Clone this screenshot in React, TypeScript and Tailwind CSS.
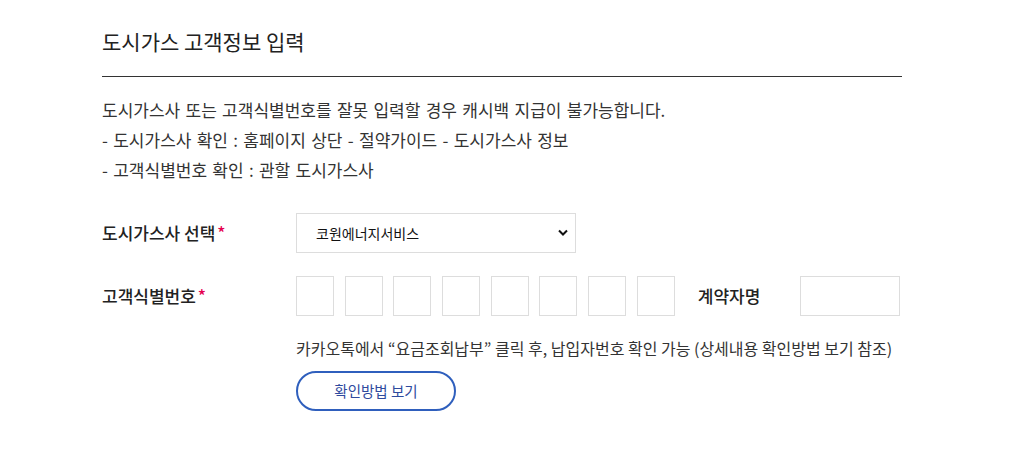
import React from 'react';

const font = { fontFamily: '"Noto Sans CJK KR", "Noto Sans", sans-serif' };

const Star = () => <span className="ml-[2px] text-[#e5004f]">*</span>;

export default function App() {
  const boxes = Array.from({ length: 8 });

  return (
    <div className="w-[1032px] h-[456px] bg-white text-[#333]" style={font}>
      <div className="ml-[102px] w-[800px] pt-[26px]">
        {/* Title */}
        <div className="border-b border-[#333] pb-[20px]">
          <h2 className="text-[21px] leading-[30px] font-normal text-[#222]">도시가스 고객정보 입력</h2>
        </div>

        {/* Notice */}
        <div className="mt-[18px] text-[17px] leading-[30px] text-[#333] [word-spacing:1.5px]">
          <p>도시가스사 또는 고객식별번호를 잘못 입력할 경우 캐시백 지급이 불가능합니다.</p>
          <p>- 도시가스사 확인 : 홈페이지 상단 - 절약가이드 - 도시가스사 정보</p>
          <p>- 고객식별번호 확인 : 관할 도시가스사</p>
        </div>

        {/* Gas company */}
        <div className="mt-[28px] flex items-center h-[40px]">
          <div className="w-[194px] text-[17px] font-medium text-[#222]">
            도시가스사 선택<Star />
          </div>
          <div className="relative w-[280px] h-[40px]">
            <select className="w-full h-full appearance-none border border-[#ddd] bg-white pl-[19px] text-[14px] text-[#111] outline-none">
              <option>코원에너지서비스</option>
            </select>
            <svg className="absolute right-[8px] top-[16px] pointer-events-none" width="10" height="7" viewBox="0 0 10 7">
              <path d="M1 1.5 L5 5.5 L9 1.5" fill="none" stroke="#111" strokeWidth="2" />
            </svg>
          </div>
        </div>

        {/* Customer number */}
        <div className="mt-[23px] flex items-center h-[40px]">
          <div className="w-[194px] text-[17px] font-medium text-[#222]">
            고객식별번호<Star />
          </div>
          <div className="flex gap-[10.7px]">
            {boxes.map((_, i) => (
              <input key={i} className="w-[38px] h-[40px] border border-[#ddd] outline-none text-center" />
            ))}
          </div>
          <div className="ml-[23px] w-[102px] text-[17px] font-medium text-[#222]">계약자명</div>
          <input className="w-[100px] h-[40px] border border-[#ddd] outline-none" />
        </div>

        {/* Help */}
        <div className="ml-[194px]">
          <p className="mt-[20px] text-[16px] leading-[24px] text-[#333]">
            카카오톡에서 “요금조회납부” 클릭 후, 납입자번호 확인 가능 (상세내용 확인방법 보기 참조)
          </p>
          <button className="mt-[11px] w-[160px] h-[40px] rounded-full border-2 border-[#2f5fbd] text-[14.5px] text-[#2e4a9e] bg-white">
            확인방법 보기
          </button>
        </div>
      </div>
    </div>
  );
}
